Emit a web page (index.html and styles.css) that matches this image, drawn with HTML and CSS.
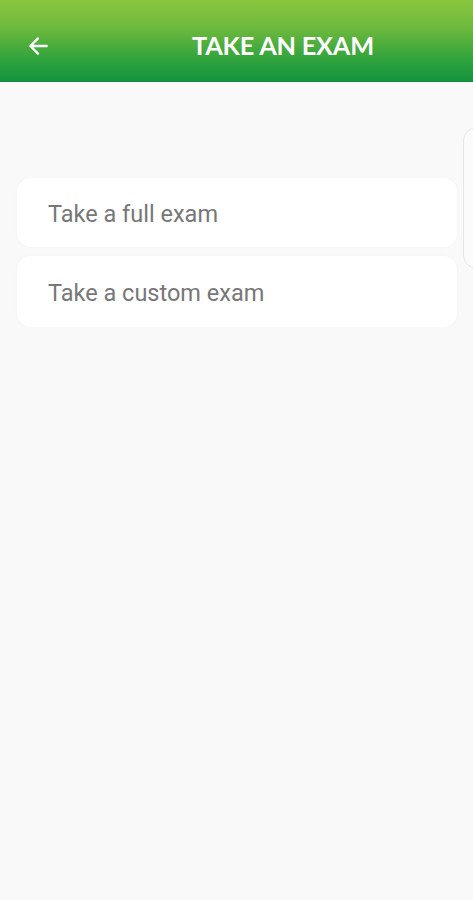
FILE: index.html
```html
<!DOCTYPE html>
<html lang="en">
<head>
<meta charset="utf-8"/>
<title>Take an exam</title>
<meta name="viewport" content="width=device-width">
<link rel="stylesheet" href="styles.css">
</head>
<body>
<header class="bar">
	<button class="back" aria-label="Back">
		<svg width="26" height="26" viewBox="0 0 24 24"><path d="M20 12H5M12 5l-7 7 7 7" fill="none" stroke="#fff" stroke-width="2.2" stroke-linecap="round" stroke-linejoin="round"/></svg>
	</button>
	<h1>TAKE AN EXAM</h1>
</header>
<main class="content">
	<ul class="choices">
		<li><a href="#">Take a full exam</a></li>
		<li><a href="#">Take a custom exam</a></li>
	</ul>
	<div class="peek"></div>
</main>
</body>
</html>
```

FILE: styles.css
```css
body {
	margin:0;
	background:#f9f9f9;
	font:400 100%/1.2 Roboto, sans-serif;
	min-height:900px;
}
.bar {
	height:82px;
	display:flex;
	align-items:center;
	box-sizing:border-box;
	padding:10px 0 0;
	background:linear-gradient(#8cc63f 0%, #6cb93c 35%, #2ea23d 75%, #15953f 100%);
	border-bottom:1px solid #0e8a3a;
}
.back {
	background:none;
	border:0;
	padding:0;
	margin-left:24px;
	width:28px;
	height:28px;
	display:flex;
	align-items:center;
	justify-content:center;
}
.bar h1 {
	margin:0 0 0 140px;
	font:700 25.3px/1 Lato, sans-serif;
	color:#fff;
	letter-spacing:-.2px;
}
.content {
	position:relative;
	overflow:hidden;
	padding:96px 16px 0 17px;
}
.choices {
	list-style:none;
	margin:0;
	padding:0;
	display:flex;
	flex-direction:column;
	gap:9px;
}
.choices li {
	background:#fff;
	border-radius:14px;
	height:69px;
	display:flex;
	align-items:center;
	box-shadow:0 0 3px rgba(0,0,0,.03);
}
.choices a {
	padding:3px 0 0 31px;
	color:#777;
	font-size:23.5px;
	text-decoration:none;
}
.choices li + li {
	height:71px;
}
.peek {
	position:absolute;
	top:45px;
	left:463px;
	width:40px;
	height:140px;
	border:1.5px solid #e6e6e6;
	border-radius:14px;
	background:#fbfbfb;
}
```
